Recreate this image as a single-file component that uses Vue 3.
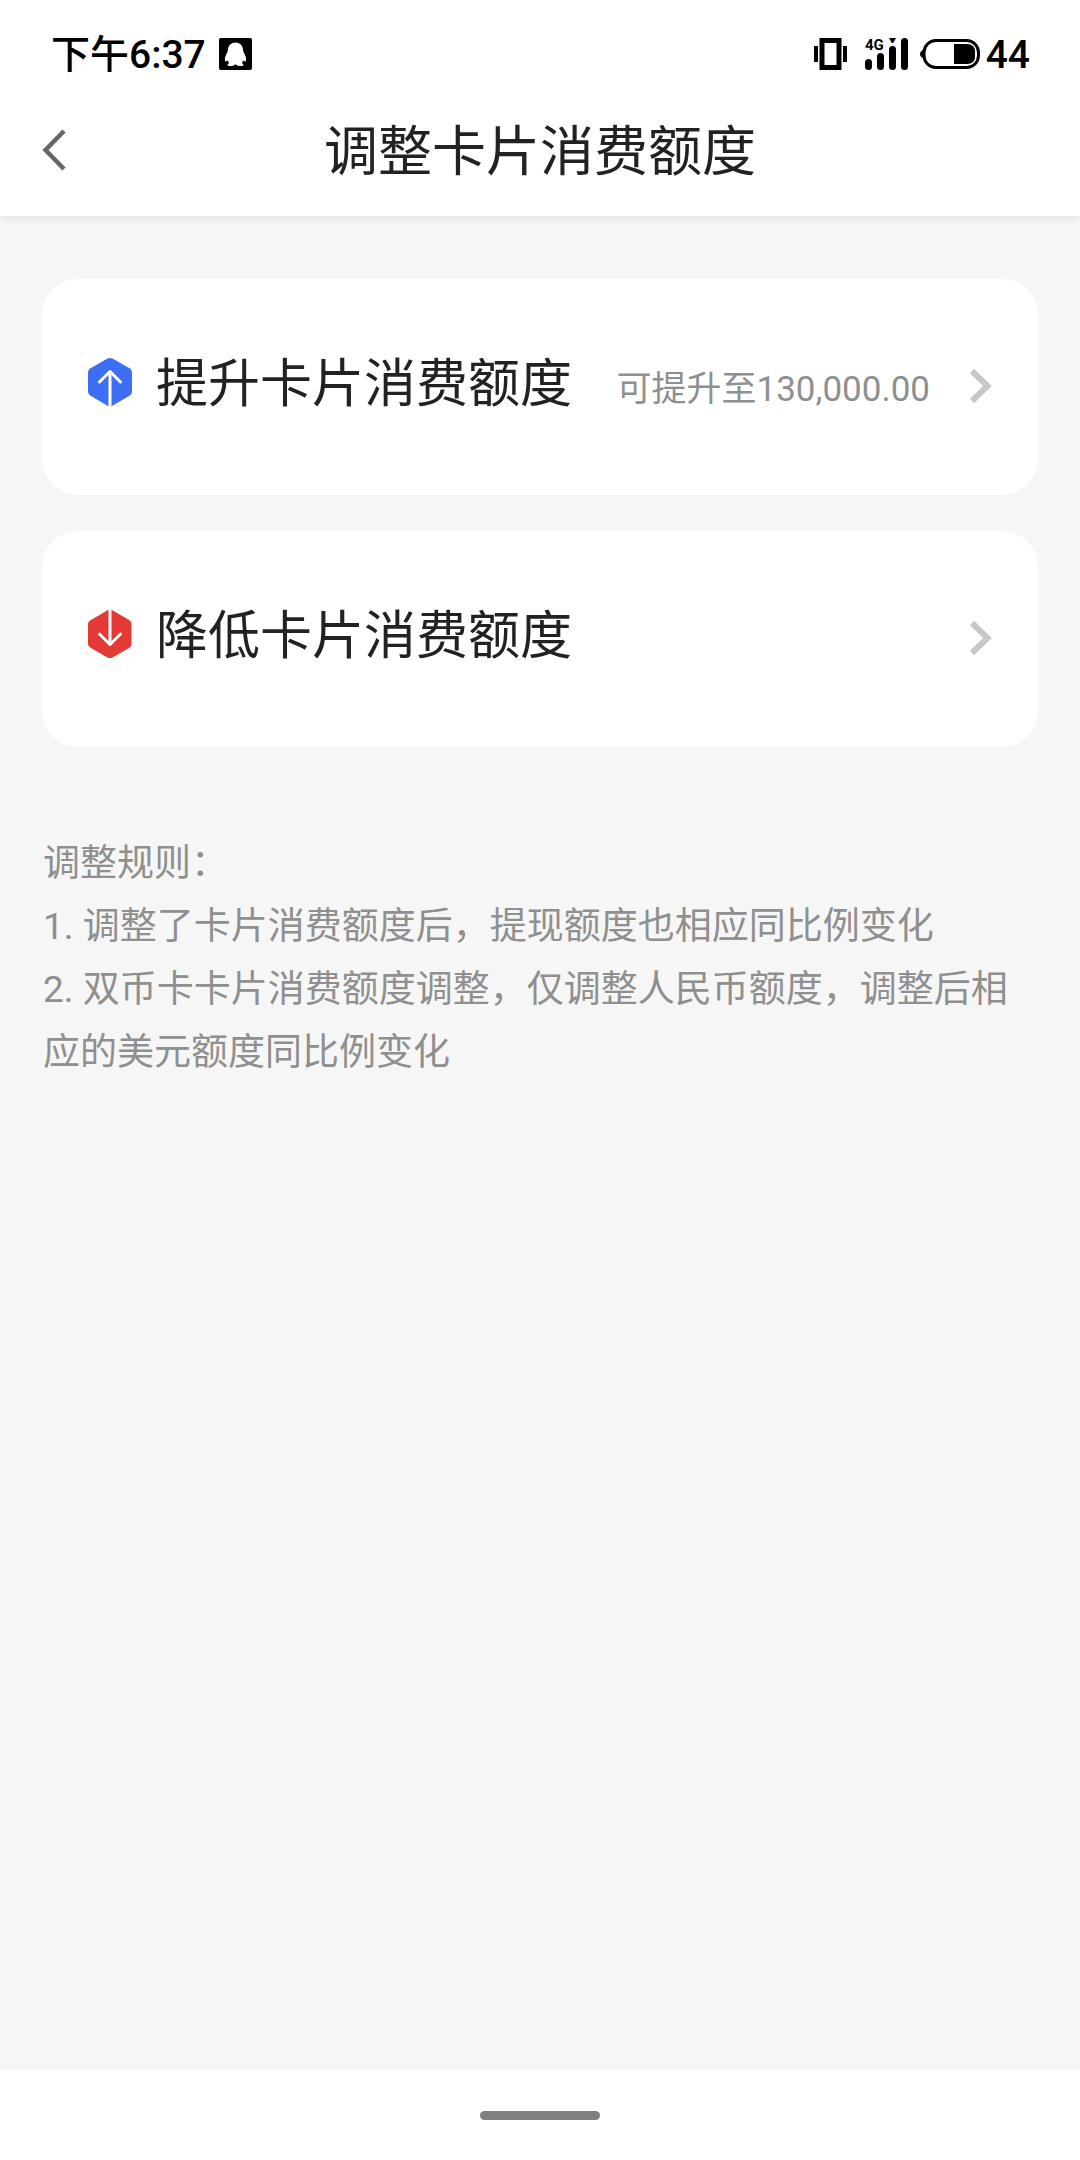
<script setup>
const actions = [
  { id: 'raise', title: '提升卡片消费额度', hint: '可提升至130,000.00' },
  { id: 'lower', title: '降低卡片消费额度', hint: '' },
]

const rules = [
  '1. 调整了卡片消费额度后，提现额度也相应同比例变化',
  '2. 双币卡卡片消费额度调整，仅调整人民币额度，调整后相应的美元额度同比例变化',
]
</script>

<template>
  <div class="page">
    <div class="status">
      <div class="status-side">
        <span class="status-text">下午6:37</span>
        <svg class="qq" width="33" height="32" viewBox="0 0 33 32" aria-hidden="true">
          <rect width="33" height="32" rx="2" fill="#000" />
          <path
            d="M16.500 4.500C12 4.500 9.300 7.500 9 11.500C8.800 13.500 8 15 7 17C5.800 19.500 5.500 22 6.300 23.500C7.300 23.500 8.300 22.800 9 22.500C9.300 24 9.800 24.600 10.200 25.200C8 25.800 7.800 28 11 28C13.500 28 15.200 27.500 16.500 26.200C17.800 27.500 19.500 28 22 28C25.200 28 25 25.800 22.800 25.200C23.200 24.600 23.700 24 24 22.500C24.700 22.800 25.700 23.500 26.700 23.500C27.500 22 27.200 19.500 26 17C25 15 24.200 13.500 24 11.500C23.700 7.500 21 4.500 16.500 4.500Z"
            fill="#fff"
          />
        </svg>
      </div>
      <div class="status-side">
        <svg width="34" height="32" viewBox="0 0 34 32" aria-hidden="true">
          <path d="M0 8H4V24H0ZM29 8H33V24H29Z" fill="#000" />
          <rect x="8" y="2.500" width="17" height="27" fill="none" stroke="#000" stroke-width="5" />
        </svg>
        <svg class="signal" width="44" height="32" viewBox="0 0 44 32" aria-hidden="true">
          <text x="0" y="12" class="net">4G</text>
          <rect x="0" y="21" width="7" height="11" rx="3.500" />
          <rect x="12" y="15" width="7" height="17" rx="3.500" />
          <rect x="24" y="8" width="7" height="24" rx="3.500" />
          <rect x="36" y="0" width="7" height="32" rx="3.500" />
          <path d="M24 0H31L28.500 4.500Q27.500 5.500 26.500 4.500Z" />
        </svg>
        <svg class="battery" width="60" height="30" viewBox="0 0 60 30" aria-hidden="true">
          <path d="M4 10.500C1.500 11.500 0 13 0 15C0 17 1.500 18.500 4 19.500Z" />
          <rect x="4" y="1.500" width="54.500" height="27" rx="12" fill="none" stroke="#000" stroke-width="3" />
          <path d="M34 5H47C52 5 55 8 55 12V18C55 22 52 25 47 25H34Z" />
        </svg>
        <span class="status-text">44</span>
      </div>
    </div>

    <header class="header">
      <button class="back" type="button" aria-label="返回">
        <svg width="24" height="42" viewBox="0 0 24 42" aria-hidden="true">
          <path d="M22 2L3.500 21L22 40" fill="none" stroke="#666" stroke-width="4.500" />
        </svg>
      </button>
      <h1 class="title">调整卡片消费额度</h1>
    </header>

    <main class="content">
      <button v-for="item in actions" :key="item.id" class="card" type="button">
        <svg class="badge" width="44" height="50" viewBox="0 0 44 50" aria-hidden="true">
          <g v-if="item.id === 'raise'">
            <path
              d="M19.500 1.600Q22 .3 24.500 1.600L41.500 11.200Q44 12.700 44 15.500V34.500Q44 37.300 41.500 38.800L24 49H20L2.500 38.800Q0 37.300 0 34.500V15.500Q0 12.700 2.500 11.200Z"
              fill="#3d6ef5"
            />
            <path d="M22 14.500V50" fill="none" stroke="#fff" stroke-width="3" />
            <path d="M11.500 25L22 14.500L32.500 25" fill="none" stroke="#fff" stroke-width="3" stroke-linecap="round" stroke-linejoin="round" />
          </g>
          <g v-else>
            <path
              d="M20 1H24L41.500 11.200Q43.500 12.500 43.500 15V35Q43.500 37.500 41.500 38.800L24.500 48.400Q22 49.700 19.500 48.400L2.500 38.800Q0 37.500 0 35V15Q0 12.500 2.500 11.200Z"
              fill="#e53935"
            />
            <path d="M22 0V35.500" fill="none" stroke="#fff" stroke-width="3" />
            <path d="M11.500 25L22 35.500L32.500 25" fill="none" stroke="#fff" stroke-width="3" stroke-linecap="round" stroke-linejoin="round" />
          </g>
        </svg>
        <span class="card-title">{{ item.title }}</span>
        <span v-if="item.hint" class="hint">{{ item.hint }}</span>
        <svg class="arrow" width="22" height="34" viewBox="0 0 22 34" aria-hidden="true">
          <path d="M2 2L17.500 17L2 32" fill="none" stroke="#c8c8ca" stroke-width="6" />
        </svg>
      </button>

      <section class="rules">
        <p>调整规则：</p>
        <p v-for="rule in rules" :key="rule">{{ rule }}</p>
      </section>
    </main>

    <footer class="gesture"><span class="pill"></span></footer>
  </div>
</template>

<style>
body {
  margin: 0;
}
</style>

<style scoped>
.page {
  display: flex;
  flex-direction: column;
  min-height: 100vh;
  background: #f6f6f6;
  color: #222;
  font-family: Roboto, "Noto Sans CJK SC", sans-serif;
}

button {
  margin: 0;
  padding: 0;
  border: 0;
  background: none;
  color: inherit;
  font: inherit;
  text-align: left;
  cursor: pointer;
}

svg {
  display: block;
  flex: none;
  overflow: visible;
}

.status {
  display: flex;
  align-items: center;
  justify-content: space-between;
  height: 60px;
  padding: 24px 50px 0 51px;
  background: #fff;
  color: #000;
}

.status-side {
  display: flex;
  align-items: center;
}

.status-text {
  padding-top: 2px;
  font-size: 39px;
  font-weight: 500;
  line-height: 60px;
}

.qq {
  margin-left: 13px;
}

.signal {
  margin-left: 17px;
}

.battery {
  margin: 0 6px 0 11px;
}

.net {
  font-size: 15px;
  font-weight: 700;
}

.header {
  display: grid;
  grid-template-columns: 1fr auto 1fr;
  align-items: center;
  height: 132px;
  background: #fff;
  box-shadow: 0 6px 6px -2px rgba(0, 0, 0, 0.06);
}

.back {
  justify-self: start;
  padding: 24px 42px;
}

.title {
  margin: 0;
  padding-top: 6px;
  font-size: 54px;
  font-weight: 400;
  line-height: 80px;
}

.content {
  display: flex;
  flex: 1;
  flex-direction: column;
  gap: 36px;
  padding: 63px 42px;
}

.card {
  display: flex;
  align-items: center;
  height: 216px;
  padding: 0 46px;
  border-radius: 36px;
  background: #fff;
}

.badge {
  margin-bottom: 10px;
}

.card-title {
  flex: 1;
  margin: 0 0 4px 24px;
  font-size: 52px;
  line-height: 76px;
}

.hint {
  padding-top: 6px;
  color: #8f8f8f;
  font-size: 35px;
  line-height: 52px;
}

.arrow {
  margin: 0 0 2px 40px;
}

.rules {
  margin-top: 49px;
  padding: 0 1px;
  color: #8f8f8f;
  font-size: 37px;
  line-height: 63px;
}

.rules p {
  margin: 0;
}

.gesture {
  display: flex;
  align-items: center;
  justify-content: center;
  height: 90px;
  background: #fff;
}

.pill {
  width: 120px;
  height: 9px;
  border-radius: 5px;
  background: #808080;
}
</style>
